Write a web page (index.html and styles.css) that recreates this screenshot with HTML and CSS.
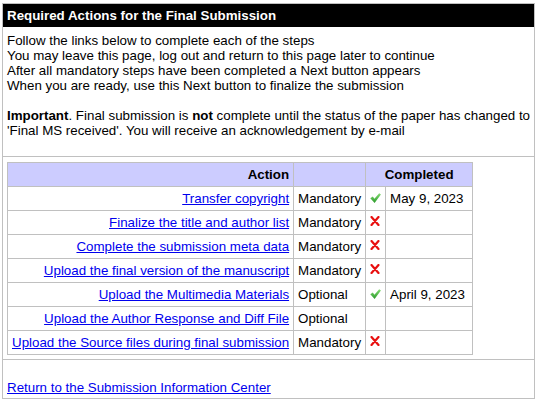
FILE: index.html
```html
<!DOCTYPE html>
<html>
<head>
<meta charset="utf-8">
<link rel="stylesheet" href="styles.css">
</head>
<body>
<div class="panel">
  <div class="title">Required Actions for the Final Submission</div>
  <div class="intro">
    Follow the links below to complete each of the steps<br>
    You may leave this page, log out and return to this page later to continue<br>
    After all mandatory steps have been completed a Next button appears<br>
    When you are ready, use this Next button to finalize the submission<br>
    <br>
    <b>Important</b>. Final submission is <b>not</b> complete until the status of the paper has changed to 'Final MS received'. You will receive an acknowledgement by e-mail
  </div>
  <div class="section">
    <table class="actions">
      <tr class="head">
        <th class="c-action">Action</th>
        <th class="c-type"></th>
        <th class="c-done" colspan="2">Completed</th>
      </tr>
      <tr>
        <td class="c-action"><a href="#">Transfer copyright</a></td>
        <td class="c-type">Mandatory</td>
        <td class="c-icon"><svg class="ok" width="11" height="10" viewBox="0 0 11 10"><defs><linearGradient id="g1" x1="0" y1="0" x2="0" y2="1"><stop offset="0" stop-color="#86dc74"/><stop offset="1" stop-color="#2a9a2a"/></linearGradient></defs><path d="M0.3 5.3 L2.8 3.5 L4.4 5.8 L9.2 0.2 L10.9 1.6 L4.6 9.9 Z" fill="url(#g1)"/></svg></td>
        <td class="c-date">May 9, 2023</td>
      </tr>
      <tr>
        <td class="c-action"><a href="#">Finalize the title and author list</a></td>
        <td class="c-type">Mandatory</td>
        <td class="c-icon"><svg class="no" width="10" height="10" viewBox="0 0 10 10"><path d="M1.5 1 L8.5 9 M8.5 1 L1.5 9" stroke="#e81010" stroke-width="2.2" stroke-linecap="round"/></svg></td>
        <td class="c-date"></td>
      </tr>
      <tr>
        <td class="c-action"><a href="#">Complete the submission meta data</a></td>
        <td class="c-type">Mandatory</td>
        <td class="c-icon"><svg class="no" width="10" height="10" viewBox="0 0 10 10"><path d="M1.5 1 L8.5 9 M8.5 1 L1.5 9" stroke="#e81010" stroke-width="2.2" stroke-linecap="round"/></svg></td>
        <td class="c-date"></td>
      </tr>
      <tr>
        <td class="c-action"><a href="#">Upload the final version of the manuscript</a></td>
        <td class="c-type">Mandatory</td>
        <td class="c-icon"><svg class="no" width="10" height="10" viewBox="0 0 10 10"><path d="M1.5 1 L8.5 9 M8.5 1 L1.5 9" stroke="#e81010" stroke-width="2.2" stroke-linecap="round"/></svg></td>
        <td class="c-date"></td>
      </tr>
      <tr>
        <td class="c-action"><a href="#">Upload the Multimedia Materials</a></td>
        <td class="c-type">Optional</td>
        <td class="c-icon"><svg class="ok" width="11" height="10" viewBox="0 0 11 10"><defs><linearGradient id="g2" x1="0" y1="0" x2="0" y2="1"><stop offset="0" stop-color="#86dc74"/><stop offset="1" stop-color="#2a9a2a"/></linearGradient></defs><path d="M0.3 5.3 L2.8 3.5 L4.4 5.8 L9.2 0.2 L10.9 1.6 L4.6 9.9 Z" fill="url(#g2)"/></svg></td>
        <td class="c-date">April 9, 2023</td>
      </tr>
      <tr>
        <td class="c-action"><a href="#">Upload the Author Response and Diff File</a></td>
        <td class="c-type">Optional</td>
        <td class="c-icon"></td>
        <td class="c-date"></td>
      </tr>
      <tr>
        <td class="c-action"><a href="#">Upload the Source files during final submission</a></td>
        <td class="c-type">Mandatory</td>
        <td class="c-icon"><svg class="no" width="10" height="10" viewBox="0 0 10 10"><path d="M1.5 1 L8.5 9 M8.5 1 L1.5 9" stroke="#e81010" stroke-width="2.2" stroke-linecap="round"/></svg></td>
        <td class="c-date"></td>
      </tr>
    </table>
  </div>
  <div class="footer">
    <a href="#">Return to the Submission Information Center</a>
  </div>
</div>
</body>
</html>
```

FILE: styles.css
```css
html, body {
  margin: 0;
  padding: 0;
  background: #ffffff;
}
body {
  font-family: "Liberation Sans", Arial, sans-serif;
  font-size: 13.33px;
  line-height: 15px;
  color: #000000;
}
a {
  color: #0000ee;
  text-decoration: underline;
}
.panel {
  margin: 3px 0 0 2px;
  width: 531px;
  border: 1px solid #c0c0c0;
}
.title {
  background: #000000;
  color: #ffffff;
  font-weight: bold;
  padding: 4px 4px;
}
.intro {
  padding: 6px 0 18px 4px;
}
.section {
  border-top: 1px solid #c0c0c0;
  padding: 5px 4px 4px;
}
.footer {
  border-top: 1px solid #c0c0c0;
  padding: 20px 4px 3px;
}
.actions {
  border-collapse: collapse;
  border: 1px solid #c0c0c0;
}
.actions th,
.actions td {
  border: 1px solid #c0c0c0;
  padding: 4px;
  line-height: 15px;
  white-space: nowrap;
}
.actions .head th {
  background: #ccccff;
  font-weight: bold;
}
.c-action {
  text-align: right;
}
.c-type {
  width: 63px;
  text-align: left;
}
.c-done {
  text-align: center;
}
.c-icon {
  width: 11px;
  vertical-align: top;
}
.c-icon svg {
  display: block;
}
.c-icon .ok {
  margin-top: 2px;
}
.c-icon .no {
  margin-top: 1px;
}
.c-date {
  width: 78px;
  text-align: left;
}
```
